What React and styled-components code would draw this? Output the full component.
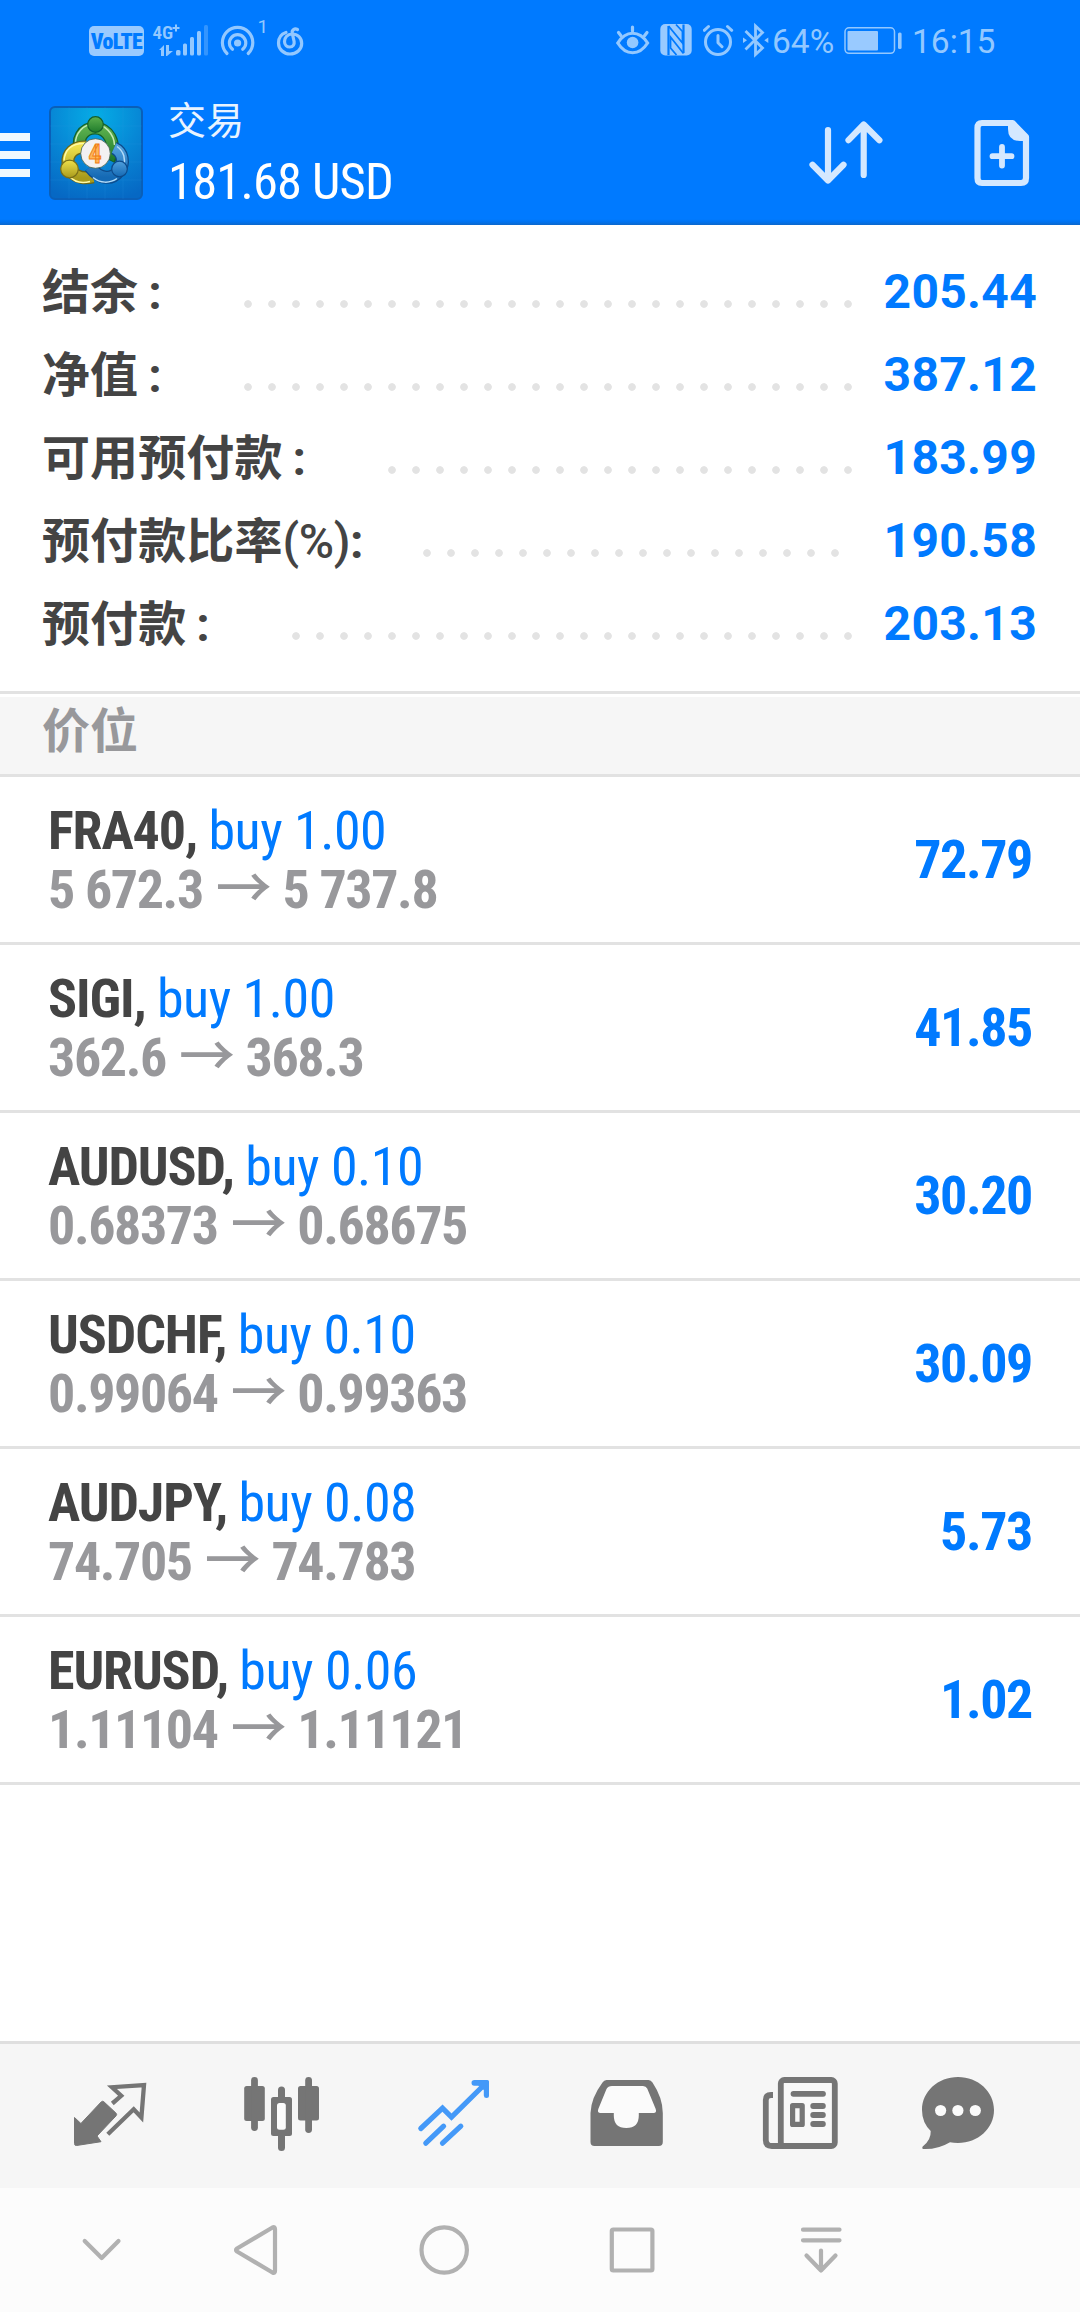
import React from "react";
import styled, { createGlobalStyle } from "styled-components";

const GlobalStyle = createGlobalStyle`
  * {
    box-sizing: border-box;
  }

  body {
    margin: 0;
    background: #ffffff;
    font-family: Roboto, "Noto Sans CJK SC", sans-serif;
  }

  svg {
    display: block;
    flex: none;
  }
`;

const StPage = styled.div`
  width: 1080px;
  height: 2312px;
  display: flex;
  flex-direction: column;
  background: #ffffff;
`;

const StHeader = styled.header`
  height: 225px;
  flex: none;
  background: linear-gradient(to bottom, #007aff 219px, #0072ee 222px, #0d68cb 225px);
`;

const StStatusBar = styled.div`
  height: 82px;
  display: flex;
  align-items: center;
  padding: 0 85px 0 89px;
  color: #93c8ff;
`;

const StStatusGroup = styled.div`
  display: flex;
  align-items: center;
`;

const StVolte = styled.span`
  width: 55px;
  height: 30px;
  border-radius: 5px;
  background: #99caff;
  color: #007aff;
  font-family: "Roboto Condensed", Roboto, sans-serif;
  font-size: 22px;
  font-weight: 900;
  letter-spacing: -0.6px;
  line-height: 31px;
  text-align: center;
`;

const StStatusText = styled.span`
  width: ${(props) => props.$width}px;
  font-size: 33.5px;
  line-height: 40px;
  white-space: nowrap;
  padding-top: 2px;
`;

const StSpacer = styled.div`
  flex: 1;
`;

const StTitleBar = styled.div`
  height: 143px;
  display: flex;
  align-items: flex-start;
`;

const StMenu = styled.div`
  width: 30px;
  margin-top: 51px;
  display: flex;
  flex-direction: column;
  gap: 10px;

  span {
    height: 8px;
    background: #f0f8ff;
  }
`;

const StLogo = styled.div`
  margin: 24px 0 0 19px;
`;

const StTitle = styled.div`
  margin: 15px 0 0 25px;
  color: #ffffff;
`;

const StScreenName = styled.div`
  height: 48px;
  color: #e9f4ff;
  font-size: 38px;
  line-height: 48px;
  letter-spacing: 0.3px;
`;

const StTotal = styled.div`
  font-family: "Roboto Condensed", Roboto, sans-serif;
  font-size: 50.5px;
  line-height: 58px;
  margin-top: 8px;
  letter-spacing: -0.8px;
`;

const StActions = styled.div`
  display: flex;
  align-items: flex-start;
  gap: 89px;
  margin-top: 37px;
  padding-right: 49px;
`;

const StSummary = styled.section`
  height: 466px;
  flex: none;
  padding: 26px 43px 0 42px;
`;

const StSummaryRow = styled.div`
  height: 83px;
  display: flex;
  align-items: center;
`;

const StLabel = styled.span`
  color: #444444;
  font-size: 48px;
  font-weight: 600;
  line-height: 72px;
  letter-spacing: 0.1px;
  white-space: nowrap;
`;

const StColon = styled.span`
  margin-left: ${(props) => (props.$tight ? 0 : 10)}px;
  font-weight: 700;
`;

const StParen = styled.span`
  font-weight: 500;
  letter-spacing: -0.4px;
`;

const StDots = styled.div`
  width: ${(props) => props.$count * 24}px;
  height: 8px;
  margin: 23px ${(props) => props.$gap}px 0 auto;
  background: radial-gradient(circle at 12px 4px, #e3e3e3 3.4px, transparent 4.2px) 0 0 / 24px 8px repeat-x;
`;

const StValue = styled.span`
  width: 156px;
  padding-bottom: 1px;
  color: #007aff;
  font-size: 48px;
  font-weight: 700;
  line-height: 72px;
  letter-spacing: 0.3px;
  text-align: right;
`;

const StSectionTitle = styled.h2`
  height: 86px;
  flex: none;
  margin: 0;
  padding: 0 42px;
  border-top: 3px solid #e2e2e2;
  border-bottom: 3px solid #e2e2e2;
  background: linear-gradient(to bottom, #ffffff 3px, #f6f6f6 3px);
  color: #98989b;
  font-size: 48px;
  font-weight: 600;
  line-height: 76px;
`;

const StPosition = styled.div`
  height: 168px;
  flex: none;
  display: flex;
  align-items: center;
  justify-content: space-between;
  padding: 0 48px;
  border-bottom: 3px solid #e2e2e2;
  font-family: "Roboto Condensed", Roboto, "Noto Sans CJK SC", sans-serif;
  font-size: 54px;
  font-weight: 700;
`;

const StLine = styled.div`
  height: 59px;
  line-height: 59px;
  white-space: nowrap;
`;

const StSymbol = styled.span`
  color: #444444;
  letter-spacing: -1.1px;
`;

const StSide = styled.span`
  color: #007aff;
  font-weight: 400;
  letter-spacing: -0.5px;
`;

const StPrices = styled(StLine)`
  color: #98989b;
  letter-spacing: -1.4px;
`;

const StArrow = styled.span`
  margin: 0 1px 0 2px;
  font-family: "Noto Sans CJK SC", sans-serif;
  font-size: 56px;
  font-weight: 500;
  line-height: 0;
`;

const StProfit = styled.div`
  color: #007aff;
  letter-spacing: -1.4px;
`;

const StTabBar = styled.nav`
  height: 147px;
  flex: none;
  margin-top: auto;
  display: flex;
  border-top: 3px solid #dfdfdf;
  background: #f6f6f6;
  color: #757575;
`;

const StTab = styled.div`
  width: 180px;
  color: ${(props) => (props.$active ? "#4499f8" : "inherit")};
`;

const StSystemBar = styled.div`
  height: 124px;
  flex: none;
  display: flex;
  background: #fcfcfc;
  color: #b1b1b1;
`;

const summary = [
  { label: "结余", value: "205.44", dots: 26 },
  { label: "净值", value: "387.12", dots: 26 },
  { label: "可用预付款", value: "183.99", dots: 20 },
  { label: "预付款比率", suffix: "(%)", value: "190.58", dots: 18 },
  { label: "预付款", value: "203.13", dots: 24 },
];

const positions = [
  { symbol: "FRA40", volume: "1.00", open: "5 672.3", current: "5 737.8", profit: "72.79" },
  { symbol: "SIGI", volume: "1.00", open: "362.6", current: "368.3", profit: "41.85" },
  { symbol: "AUDUSD", volume: "0.10", open: "0.68373", current: "0.68675", profit: "30.20" },
  { symbol: "USDCHF", volume: "0.10", open: "0.99064", current: "0.99363", profit: "30.09" },
  { symbol: "AUDJPY", volume: "0.08", open: "74.705", current: "74.783", profit: "5.73" },
  { symbol: "EURUSD", volume: "0.06", open: "1.11104", current: "1.11121", profit: "1.02" },
];

function SignalIcon() {
  return (
    <svg width="68" height="40" viewBox="144 21 68 40" fill="currentColor">
      <text x="152.500" y="38.500" fontSize="19" fontWeight="600" fontFamily="Roboto Condensed">4G</text>
      <path d="M172.500 28h7M176 24.500v7" stroke="currentColor" strokeWidth="2" />
      <path d="M159 50l5-5v11h-3v-6zM166 45h3v6h4l-6 5h-1z" />
      <rect x="176" y="50" width="4.500" height="5.500" rx="1.500" />
      <rect x="183" y="43.500" width="4" height="12" rx="1.500" />
      <rect x="190" y="37" width="4" height="18.500" rx="1.500" />
      <rect x="197" y="31" width="4" height="24.500" rx="1.500" />
      <rect x="204" y="25" width="4" height="30.500" rx="1.500" opacity="0.350" />
    </svg>
  );
}

function HotspotIcon() {
  return (
    <svg width="60" height="50" viewBox="212 16 60 50" fill="none" stroke="currentColor" strokeWidth="3.200" strokeLinecap="round">
      <path d="M227 53.500a15.200 15.200 0 1 1 21.200 0" />
      <path d="M232.500 49.300a8.200 8.200 0 1 1 10.200 0" />
      <circle cx="237.600" cy="43" r="3.600" fill="currentColor" stroke="none" />
      <text x="257.500" y="32.500" fontSize="19" fontFamily="Roboto" fill="currentColor" stroke="none">1</text>
    </svg>
  );
}

function MusicIcon() {
  return (
    <svg width="34" height="40" viewBox="272 21 34 40" fill="none" stroke="currentColor" strokeWidth="3.200" strokeLinecap="round">
      <path d="M286 32.500c-4.500 1.500-7.500 5.500-7.500 10.500 0 6 5 11 11.500 11s11.700-4.500 11.700-10.500c0-5.500-4-9.500-9.700-9.500-4.500 0-7.500 3.500-7.500 7.500 0 3.500 2.500 5.500 5.300 5.500 3.200 0 4.800-2.500 4.300-5.500l-1.900-8.500c-.5-3 2.300-5 5.300-3.500" />
    </svg>
  );
}

function EyeIcon() {
  return (
    <svg width="44" height="40" viewBox="616 21 44 40" fill="none" stroke="currentColor" strokeWidth="3.200" strokeLinecap="round">
      <path d="M617.800 43c8-13 21.500-13 29.800 0-8.300 13-21.800 13-29.800 0z" />
      <circle cx="632.600" cy="42.500" r="5.800" fill="currentColor" stroke="none" />
      <path d="M632.500 27v4M618.500 32.500l2.500 3.300M647 32.500l-2.500 3.300" />
    </svg>
  );
}

function NfcIcon() {
  return (
    <svg width="43" height="40" viewBox="660 21 43 40">
      <rect x="660.300" y="24" width="31.400" height="31.500" rx="5" fill="#99caff" />
      <path d="M668.500 55V26M683.500 24.500V53" stroke="#007aff" strokeWidth="2.200" />
      <path d="M668.500 26l14 17V31.500l-6.500-7M683.500 53.500l-13-16.500v11l6 7" fill="none" stroke="#007aff" strokeWidth="1.800" />
    </svg>
  );
}

function AlarmIcon() {
  return (
    <svg width="40" height="40" viewBox="703 21 40 40" fill="none" stroke="currentColor" strokeWidth="3" strokeLinecap="round" strokeLinejoin="round">
      <circle cx="718" cy="42" r="12.500" />
      <path d="M718 35.500v7.200l4 4M704.300 30.300l4.200-3.800M731.700 30.300l-4.200-3.800" />
    </svg>
  );
}

function BluetoothIcon() {
  return (
    <svg width="29" height="40" viewBox="743 21 29 40" fill="none" stroke="currentColor" strokeWidth="2.800">
      <path d="M745.500 31l17 17-7 6.500V26l7 6.500-17 17" />
      <path d="M743 37.500l4 2.700-4 2.700zM768.300 37.500l-4 2.700 4 2.700z" fill="currentColor" stroke="none" />
    </svg>
  );
}

function BatteryIcon() {
  return (
    <svg width="77" height="40" viewBox="835 21 77 40" fill="none">
      <rect x="845" y="27.800" width="49.500" height="25.500" rx="4" stroke="currentColor" strokeWidth="1.500" />
      <rect x="847.500" y="31" width="30.500" height="19.500" rx="1" fill="#99caff" />
      <rect x="898" y="32.500" width="3.600" height="16.500" rx="1.500" fill="currentColor" />
    </svg>
  );
}

function AppLogo() {
  return (
    <svg width="94" height="94" viewBox="0 0 94 94">
      <defs>
        <radialGradient id="tile" cx="0.500" cy="0.100" r="0.950">
          <stop offset="0" stopColor="#05ade6" />
          <stop offset="0.500" stopColor="#0788d6" />
          <stop offset="1" stopColor="#0668c4" />
        </radialGradient>
        <linearGradient id="green" x1="0" y1="0" x2="0" y2="1">
          <stop offset="0" stopColor="#5cb04e" />
          <stop offset="1" stopColor="#1f7c2c" />
        </linearGradient>
        <linearGradient id="yellow" x1="0" y1="0" x2="0" y2="1">
          <stop offset="0" stopColor="#efe04a" />
          <stop offset="1" stopColor="#a89a1c" />
        </linearGradient>
        <linearGradient id="blue" x1="0" y1="0" x2="0" y2="1">
          <stop offset="0" stopColor="#4f9fdc" />
          <stop offset="1" stopColor="#1469b4" />
        </linearGradient>
      </defs>
      <rect x="1" y="1" width="92" height="92" rx="5" fill="url(#tile)" stroke="#0a5fb8" strokeWidth="2" />
      <path d="M20 1v92M38 1v92M56 1v92M74 1v92M1 20h92M1 38h92M1 56h92M1 74h92" stroke="#2c9be0" strokeWidth="0.500" opacity="0.350" />
      <g fill="none">
        <path d="M33 46C26 34 34 22 46 22s23 14 14 32" stroke="#145f2b" strokeWidth="13" />
        <path d="M33 45C26 34 34 22 46 22s23 14 14 31" stroke="url(#green)" strokeWidth="10.500" />
        <path d="M26.500 38C26 28 34 18 45 18s20 10 20.500 21" stroke="#c5eab5" strokeWidth="1.500" />
        <path d="M37 41c-12-1-19 7-18 16 1 11 12 17 25 14" stroke="#6c6718" strokeWidth="13" />
        <path d="M37 41c-12-1-19 7-18 16 1 11 12 17 25 14" stroke="url(#yellow)" strokeWidth="10.500" />
        <path d="M35 37.500c-12 0-19 6-20 17M20 70c6 7 13 7.500 21 5.500" stroke="#fff9a4" strokeWidth="1.500" />
        <path d="M65 42c9 4 11 15 5 23-7 9-19 9-29-4" stroke="#0d4b8b" strokeWidth="13" />
        <path d="M65 42c9 4 11 15 5 23-7 9-19 9-29-4" stroke="url(#blue)" strokeWidth="10.500" />
        <path d="M68 40.500c7 5 9 13 6.500 20M44 71.500c7 6 17 6 24 1" stroke="#b4dcf8" strokeWidth="1.500" />
      </g>
      <circle cx="46.500" cy="18.500" r="7.800" fill="url(#green)" stroke="#145f2b" strokeWidth="1.200" />
      <circle cx="20.500" cy="63" r="8.800" fill="url(#yellow)" stroke="#7a7018" strokeWidth="1.200" />
      <circle cx="70.500" cy="63" r="7.800" fill="url(#blue)" stroke="#0d4b8b" strokeWidth="1.200" />
      <circle cx="46.500" cy="47.500" r="14.800" fill="#f3f1f2" stroke="#3b5d4a" strokeWidth="0.800" />
      <text x="46" y="57" textAnchor="middle" fontSize="26" fontWeight="700" fontFamily="Roboto Condensed" fill="#ffb65a" stroke="#f07d12" strokeWidth="0.900">4</text>
    </svg>
  );
}

function SortIcon() {
  return (
    <svg width="75" height="70" viewBox="809 119 75 70" fill="none" stroke="#d4e8ff" strokeWidth="6.200" strokeLinecap="round" strokeLinejoin="round">
      <path d="M828 130v50M812.500 164.800l15.500 15.700 15.500-15.700" />
      <path d="M863.700 175v-50M848.500 140.200l15.200-15.700 15.700 15.700" />
    </svg>
  );
}

function NewOrderIcon() {
  return (
    <svg width="58" height="70" viewBox="973 119 58 70" fill="none" stroke="#d4e8ff" strokeWidth="6.200">
      <path d="M982 123h30.500l13.500 14v41q0 5-5 5h-39q-4.500 0-4.500-5v-50q0-5 4.500-5z" strokeLinejoin="round" />
      <path d="M1008 123v6q0 12 12 12h8l-2-6-12-12z" fill="#d4e8ff" stroke="none" />
      <path d="M1002 147v18.500M992.500 156.200h19" strokeWidth="5.800" strokeLinecap="round" />
    </svg>
  );
}

function QuotesIcon() {
  return (
    <svg width="180" height="144" viewBox="0 0 180 144" fill="none">
      <path d="M74.500 73.500l6.400 6 20.200-21.500q1.500-1.500 3 0l11.800 11q1.500 1.500 0 3L97 92l4 5.700-24.500 3.800q-2 .2-2-2z" fill="currentColor" stroke="currentColor" strokeLinejoin="round" />
      <path d="M112.300 59.500l8.900-7.700-9.200-8.600 32-2.200-2.600 32.500-7.700-8.200-25.900 25" stroke="currentColor" strokeWidth="4.300" />
    </svg>
  );
}

function ChartIcon() {
  return (
    <svg width="180" height="144" viewBox="0 0 180 144" fill="currentColor">
      <rect x="64.200" y="42" width="20.600" height="35" rx="2.500" />
      <rect x="71.100" y="33" width="6.800" height="54" rx="3.400" />
      <rect x="118" y="42" width="21" height="34.500" rx="2.500" />
      <rect x="125.200" y="33" width="6.800" height="56" rx="3.400" />
      <rect x="98" y="42.500" width="7" height="64.500" rx="3.500" />
      <rect x="91" y="53" width="21" height="39" rx="2.500" />
      <rect x="97" y="59" width="8.800" height="26.800" rx="2.500" fill="#fbfbfb" />
    </svg>
  );
}

function TradeIcon() {
  return (
    <svg width="180" height="144" viewBox="0 0 180 144" fill="none" stroke="currentColor" strokeWidth="5.200" strokeLinecap="round">
      <path d="M60.800 84.500l21.700-20.300 9 9L124 41" />
      <path d="M65.800 99.200l17.800-17M82.500 99.200l18.300-17" />
      <path d="M111.500 38.800q0-2.800 3-2.800h13q1.500 0 1.500 1.500v14q0 2.500-2.500 2.500t-2.700-2.500V46l-5.500-4.200h-4q-2.800 0-2.800-3z" fill="currentColor" stroke="none" />
    </svg>
  );
}

function HistoryIcon() {
  return (
    <svg width="180" height="144" viewBox="0 0 180 144">
      <path d="M66.500 36h42q2.500 0 4 2.500Q122.800 54 122.800 69v29q0 4-4 4H54.500q-4 0-4-4V69Q51 54 62.500 38.500 64 36 66.500 36z" fill="currentColor" />
      <path d="M72 42h31q3 0 4.200 2.500l8.500 20.500q1.300 4-2.200 4H98.800v2.500q0 12.500-12.500 12.500T73.800 71.500V69H60.500q-3.500 0-2.200-4l8.200-20q1.500-3 5.500-3z" fill="#fbfbfb" />
    </svg>
  );
}

function NewsIcon() {
  return (
    <svg width="180" height="144" viewBox="0 0 180 144" fill="none" stroke="currentColor" strokeWidth="5.800">
      <path d="M53 51h-2q-5.200 0-5.200 5v40q0 6 6 6h14" />
      <rect x="60.800" y="36" width="54" height="66" rx="3.500" fill="#f8f8f8" />
      <path d="M73.500 49.800h29.500M93.200 62h9.700M93.200 71h9.700M93.200 80h9.700" strokeLinecap="round" />
      <rect x="72.600" y="61.600" width="9.600" height="18.800" strokeWidth="5.200" strokeLinejoin="round" />
    </svg>
  );
}

function ChatIcon() {
  return (
    <svg width="180" height="144" viewBox="0 0 180 144" fill="currentColor">
      <path d="M58 33c20 0 36 14.500 36 33S78 99 58 99q-4.500 0-8-.8Q38 105.500 23.500 105q-2-.5-.8-2.500 8.500-6.500 8-15.500Q22 78.500 22 66c0-18.500 16-33 36-33z" />
      <g fill="#fbfbfb">
        <circle cx="40.600" cy="66.500" r="5.600" />
        <circle cx="57.900" cy="66.500" r="5.600" />
        <circle cx="75.300" cy="66.500" r="5.600" />
      </g>
    </svg>
  );
}

function SystemIcon({ children }) {
  return (
    <svg width="190" height="124" viewBox="0 0 190 124" fill="none" stroke="currentColor" strokeWidth="4.200" strokeLinecap="round" strokeLinejoin="round">
      {children}
    </svg>
  );
}

function Header() {
  return (
    <StHeader>
      <StStatusBar>
        <StStatusGroup>
          <StVolte>VoLTE</StVolte>
          <SignalIcon />
          <HotspotIcon />
          <MusicIcon />
        </StStatusGroup>
        <StSpacer />
        <StStatusGroup>
          <EyeIcon />
          <NfcIcon />
          <AlarmIcon />
          <BluetoothIcon />
          <StStatusText $width={63}>64%</StStatusText>
          <BatteryIcon />
          <StStatusText $width={83}>16:15</StStatusText>
        </StStatusGroup>
      </StStatusBar>
      <StTitleBar>
        <StMenu>
          <span />
          <span />
          <span />
        </StMenu>
        <StLogo>
          <AppLogo />
        </StLogo>
        <StTitle>
          <StScreenName>交易</StScreenName>
          <StTotal>181.68 USD</StTotal>
        </StTitle>
        <StSpacer />
        <StActions>
          <SortIcon />
          <NewOrderIcon />
        </StActions>
      </StTitleBar>
    </StHeader>
  );
}

function Summary() {
  return (
    <StSummary>
      {summary.map((row) => (
        <StSummaryRow key={row.label}>
          <StLabel>
            {row.label}
            {row.suffix && <StParen>{row.suffix}</StParen>}
            <StColon $tight={Boolean(row.suffix)}>:</StColon>
          </StLabel>
          <StDots $count={row.dots} $gap={row.suffix ? 34 : 21} />
          <StValue>{row.value}</StValue>
        </StSummaryRow>
      ))}
    </StSummary>
  );
}

function Position({ item }) {
  return (
    <StPosition>
      <div>
        <StLine>
          <StSymbol>{item.symbol}, </StSymbol>
          <StSide>buy {item.volume}</StSide>
        </StLine>
        <StPrices>
          {item.open} <StArrow>→</StArrow> {item.current}
        </StPrices>
      </div>
      <StProfit>{item.profit}</StProfit>
    </StPosition>
  );
}

const App = () => {
  return (
    <StPage>
      <GlobalStyle />
      <Header />
      <Summary />
      <StSectionTitle>价位</StSectionTitle>
      {positions.map((item) => (
        <Position key={item.symbol} item={item} />
      ))}
      <StTabBar>
        <StTab><QuotesIcon /></StTab>
        <StTab><ChartIcon /></StTab>
        <StTab $active><TradeIcon /></StTab>
        <StTab><HistoryIcon /></StTab>
        <StTab><NewsIcon /></StTab>
        <StTab><ChatIcon /></StTab>
      </StTabBar>
      <StSystemBar>
        <SystemIcon>
          <path d="M84.700 53l17 17 16.800-17" />
        </SystemIcon>
        <SystemIcon>
          <path d="M47 60.500L82.500 39.500q2.500-1.200 2.500 1.500v42q0 2.700-2.500 1.500L47 63.500q-2-1.500 0-3z" />
        </SystemIcon>
        <SystemIcon>
          <circle cx="64.200" cy="62" r="22.700" />
        </SystemIcon>
        <SystemIcon>
          <rect x="41.800" y="41.500" width="40.600" height="41" rx="1.500" />
        </SystemIcon>
        <SystemIcon>
          <path d="M43 41.700h36.500M43 52.300h36.500M61 62.500v20M46.500 67.500l14.500 15 14.500-15" />
        </SystemIcon>
      </StSystemBar>
    </StPage>
  );
};

export default App;
